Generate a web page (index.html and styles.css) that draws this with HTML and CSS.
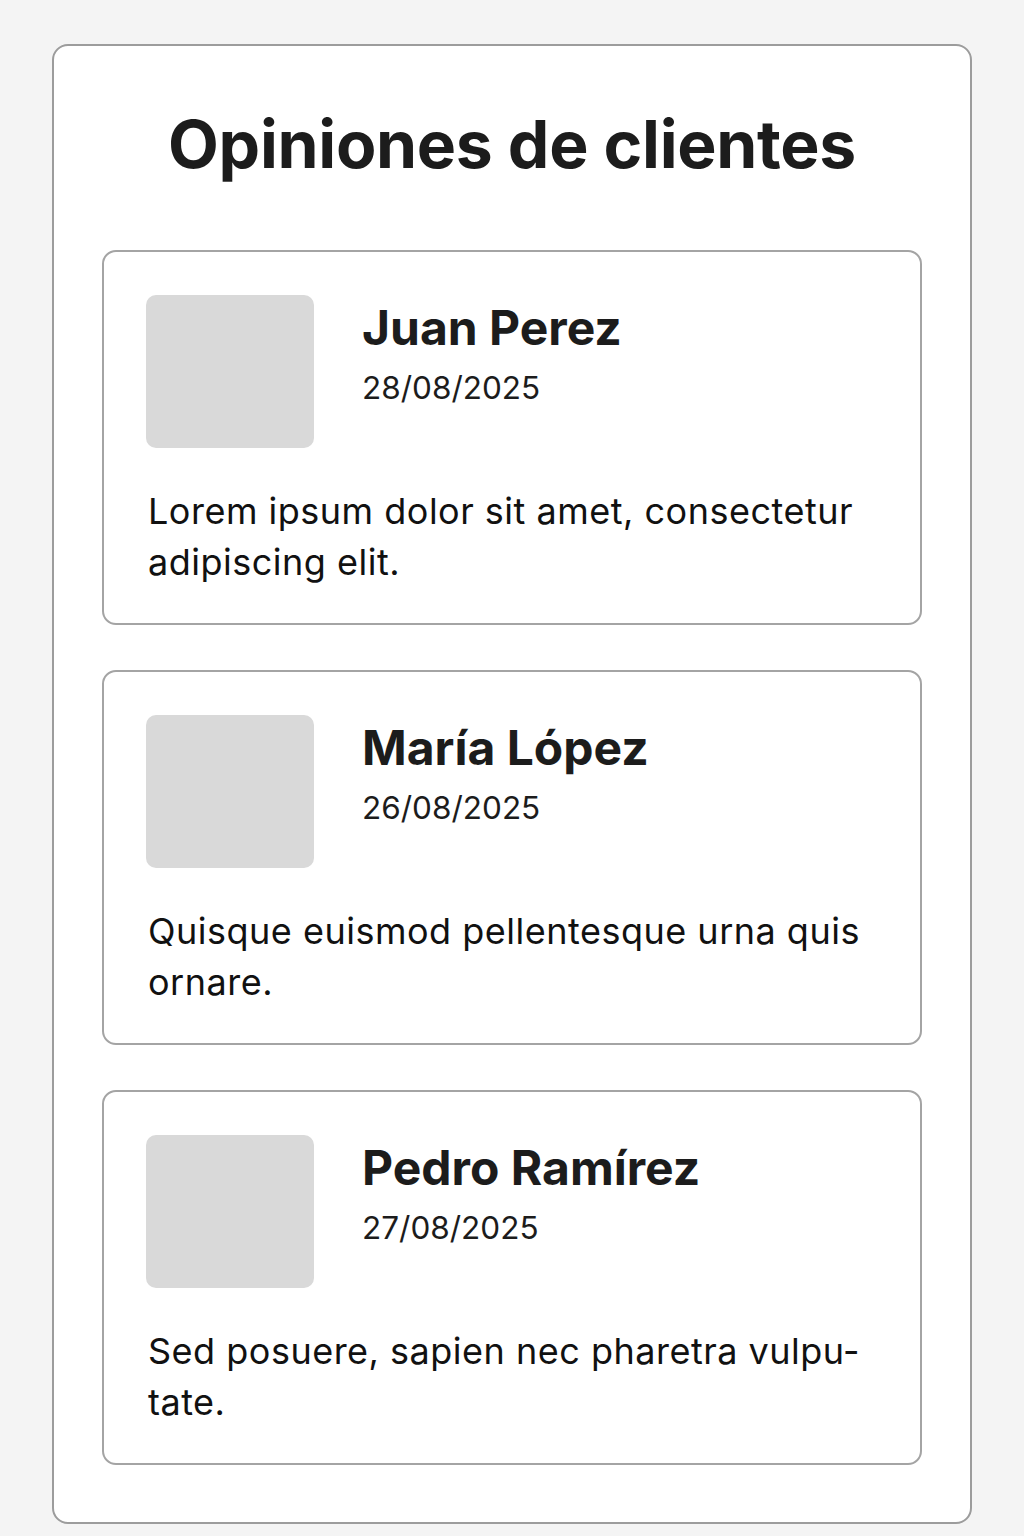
FILE: index.html
```html
<!DOCTYPE html>
<html lang="es">
<head>
<meta charset="utf-8">
<title>Opiniones de clientes</title>
<link rel="stylesheet" href="styles.css">
</head>
<body>
<main class="panel">
  <h1 class="title">Opiniones de clientes</h1>
  <div class="list">
    <article class="review">
      <div class="head">
        <div class="avatar"></div>
        <div class="meta">
          <h2 class="name">Juan Perez</h2>
          <div class="date">28/08/2025</div>
        </div>
      </div>
      <p class="text">Lorem ipsum dolor sit amet, consectetur adipiscing elit.</p>
    </article>
    <article class="review">
      <div class="head">
        <div class="avatar"></div>
        <div class="meta">
          <h2 class="name">María López</h2>
          <div class="date">26/08/2025</div>
        </div>
      </div>
      <p class="text">Quisque euismod pellentesque urna quis ornare.</p>
    </article>
    <article class="review">
      <div class="head">
        <div class="avatar"></div>
        <div class="meta">
          <h2 class="name">Pedro Ramírez</h2>
          <div class="date">27/08/2025</div>
        </div>
      </div>
      <p class="text">Sed posuere, sapien nec pharetra vulpu&shy;tate.</p>
    </article>
  </div>
</main>
</body>
</html>
```
FILE: styles.css
```css
* { box-sizing: border-box; }
html, body { margin: 0; padding: 0; }
body {
  background: #f4f4f4;
  font-family: Inter, "Liberation Sans", sans-serif;
  color: #1c1c1c;
  padding: 44px 52px 12px;
}
.panel {
  background: #ffffff;
  border: 2px solid #9c9c9c;
  border-radius: 16px;
  padding: 62px 48px 57px;
}
.title {
  margin: 0 0 70px;
  text-align: center;
  font-size: 66px;
  font-weight: 700;
  line-height: 72px;
  letter-spacing: -0.3px;
}
.list {
  display: flex;
  flex-direction: column;
  gap: 45px;
}
.review {
  border: 2px solid #a4a4a4;
  border-radius: 14px;
  padding: 43px 42px 35px;
}
.head {
  display: flex;
  align-items: flex-start;
  gap: 48px;
}
.avatar {
  width: 168px;
  height: 153px;
  background: #d9d9d9;
  border-radius: 10px;
  flex: none;
}
.meta {
  padding-top: 5px;
}
.name {
  margin: 0;
  font-size: 48px;
  font-weight: 700;
  line-height: 56px;
}
.date {
  margin-top: 13px;
  font-size: 31.5px;
  font-weight: 400;
  line-height: 38px;
}
.text {
  margin: 38px 0 0 2px;
  font-size: 36px;
  line-height: 51px;
  letter-spacing: 0.5px;
  color: #111;
}
```
